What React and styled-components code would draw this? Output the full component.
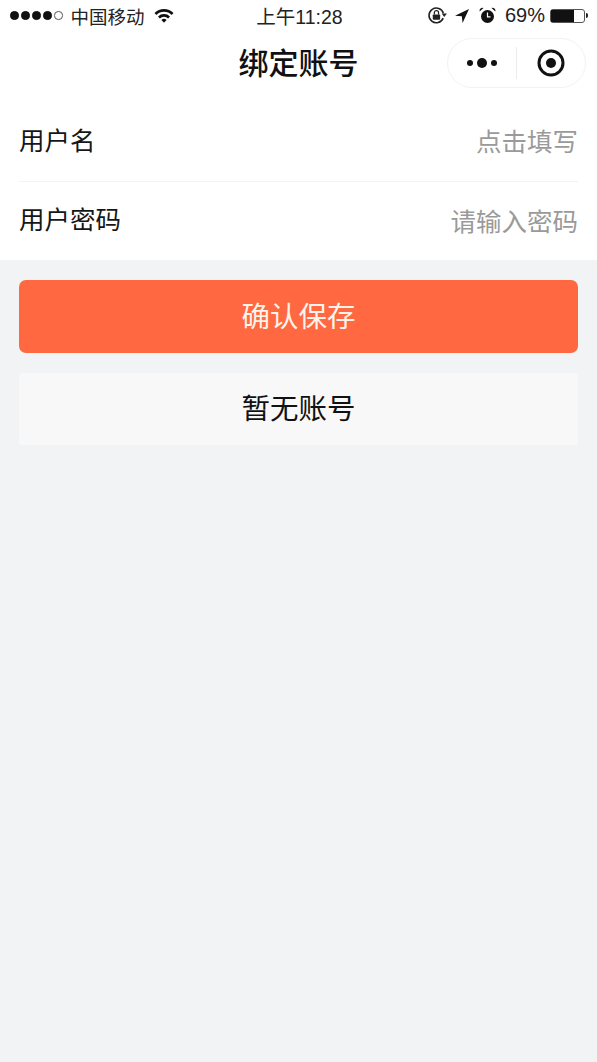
import React from 'react';
import styled, { createGlobalStyle } from 'styled-components';

const GlobalStyle = createGlobalStyle`
  html, body {
    margin: 0;
    padding: 0;
    background: #f2f3f5;
    font-family: "Noto Sans CJK SC", "Liberation Sans", sans-serif;
  }
`;

const Page = styled.div`
  width: 597px;
  height: 1062px;
  overflow: hidden;
  background: #f2f3f5;
  display: flex;
  flex-direction: column;
`;

const Header = styled.div`
  background: #fff;
`;

const StatusBar = styled.div`
  height: 33px;
  padding: 0 8px 2px 10px;
  box-sizing: border-box;
  display: grid;
  grid-template-columns: 1fr auto 1fr;
  align-items: center;
  color: #111;
`;

const StatusLeft = styled.div`
  display: flex;
  align-items: center;
  gap: 8px;
  font-size: 18.5px;
  color: #222;
`;

const StatusRight = styled.div`
  display: flex;
  align-items: center;
  justify-content: flex-end;
  font-size: 20px;
  color: #222;
`;

const Clock = styled.div`
  font-size: 19.5px;
  color: #222;
  span {
    font-family: "Liberation Sans", sans-serif;
  }
`;

const Dots = styled.div`
  display: flex;
  gap: 2.5px;
`;

const Dot = styled.i`
  width: 8.5px;
  height: 8.5px;
  box-sizing: border-box;
  border-radius: 50%;
  background: ${(p) => (p.$empty ? '#fff' : '#111')};
  border: 1px solid ${(p) => (p.$empty ? '#555' : '#111')};
`;

const Percent = styled.span`
  font-family: "Liberation Sans", sans-serif;
  margin: 0 5px 0 9px;
`;

const IconSlot = styled.svg`
  display: block;
  flex: none;
  margin-left: ${(p) => p.$ml || 0}px;
`;

const Battery = styled.div`
  width: 35px;
  height: 14px;
  box-sizing: border-box;
  border: 1px solid #555;
  border-radius: 3px;
  margin-right: 4px;
  position: relative;
  &::after {
    content: "";
    position: absolute;
    right: -4px;
    top: 3px;
    width: 2px;
    height: 5px;
    background: #222;
    border-radius: 0 2px 2px 0;
  }
`;

const BatteryFill = styled.div`
  height: 100%;
  background: #111;
`;

const NavBar = styled.div`
  height: 71px;
  position: relative;
  display: flex;
  align-items: flex-start;
  justify-content: center;
`;

const Title = styled.h1`
  margin: 7px 0 0;
  font-size: 30px;
  line-height: 42px;
  font-weight: 500;
  color: #111;
`;

const Capsule = styled.div`
  position: absolute;
  top: 5px;
  right: 11px;
  width: 139px;
  height: 50px;
  box-sizing: border-box;
  border: 1px solid #f2f2f2;
  border-radius: 25px;
  background: #fff;
  display: flex;
  align-items: center;
`;

const CapsuleHalf = styled.div`
  flex: 1;
  height: 100%;
  display: flex;
  align-items: center;
  justify-content: center;
`;

const CapsuleLine = styled.div`
  width: 1px;
  height: 32px;
  background: #ececec;
`;

const Form = styled.div`
  background: #fff;
  padding: 0 19px;
  margin-top: -2px;
`;

const Row = styled.div`
  height: ${(p) => (p.$last ? 78 : 79)}px;
  display: flex;
  align-items: center;
  justify-content: space-between;
  border-bottom: ${(p) => (p.$last ? 'none' : '1px solid #f3f3f3')};
`;

const Label = styled.div`
  font-size: 25.5px;
  color: #161616;
  margin-bottom: ${(p) => (p.$last ? 8 : 7)}px;
`;

const Placeholder = styled.div`
  font-size: 25.5px;
  color: #9a9a9a;
  margin-bottom: ${(p) => (p.$last ? 3 : 5)}px;
`;

const Actions = styled.div`
  padding: 20px 19px 0;
  display: flex;
  flex-direction: column;
  gap: 20px;
`;

const Button = styled.div`
  height: ${(p) => (p.$primary ? 73 : 72)}px;
  box-sizing: border-box;
  padding-bottom: ${(p) => (p.$primary ? 4 : 5)}px;
  border-radius: ${(p) => (p.$primary ? 7 : 3)}px;
  background: ${(p) => (p.$primary ? '#ff6841' : '#f8f8f9')};
  color: ${(p) => (p.$primary ? '#fdf3ea' : '#111')};
  font-size: 28.5px;
  display: flex;
  align-items: center;
  justify-content: center;
`;

function Wifi() {
  return (
    <IconSlot width="20" height="15" viewBox="0 0 20 15" $ml={1}>
      <path d="M0.5 5 A13.5 13.5 0 0 1 19.5 5 L17.6 7 A10.8 10.8 0 0 0 2.4 7 Z" fill="#111" />
      <path d="M4 8.5 A8.6 8.6 0 0 1 16 8.5 L14.1 10.4 A6 6 0 0 0 5.9 10.4 Z" fill="#111" />
      <path d="M7.4 12 A3.8 3.8 0 0 1 12.6 12 L10 14.8 Z" fill="#111" />
    </IconSlot>
  );
}

function RotationLock() {
  return (
    <IconSlot width="21" height="19" viewBox="0 0 20 18">
      <path d="M15.4 11.5 A7 7 0 1 1 15.6 6.8" fill="none" stroke="#222" strokeWidth="1.5" />
      <path d="M14 7 L19 7 L16.4 10.4 Z" fill="#222" />
      <rect x="5.5" y="8" width="7" height="5" rx="0.8" fill="#222" />
      <path d="M7 8 V6.4 A2 2 0 0 1 11 6.4 V8" fill="none" stroke="#222" strokeWidth="1.2" />
    </IconSlot>
  );
}

function LocationArrow() {
  return (
    <IconSlot width="16" height="16" viewBox="0 0 16 16" $ml={6}>
      <path d="M15 1 L1 7.8 L7.8 8.2 L8.6 15 Z" fill="#111" />
    </IconSlot>
  );
}

function AlarmClock() {
  return (
    <IconSlot width="17" height="17" viewBox="0 0 17 17" $ml={9}>
      <circle cx="8.5" cy="9.5" r="6.5" fill="#111" />
      <path d="M8.5 5.5 V9.8 H11.5" fill="none" stroke="#fff" strokeWidth="1.2" />
      <path d="M0.6 4.5 A3 3 0 0 1 4.5 1 Z" fill="#111" />
      <path d="M16.4 4.5 A3 3 0 0 0 12.5 1 Z" fill="#111" />
    </IconSlot>
  );
}

function MoreDots() {
  return (
    <IconSlot width="32" height="12" viewBox="0 0 32 12">
      <circle cx="4" cy="6" r="3" fill="#111" />
      <circle cx="16" cy="6" r="5" fill="#111" />
      <circle cx="28" cy="6" r="3" fill="#111" />
    </IconSlot>
  );
}

function Target() {
  return (
    <IconSlot width="28" height="28" viewBox="0 0 28 28">
      <circle cx="14" cy="14" r="12" fill="none" stroke="#111" strokeWidth="3" />
      <circle cx="14" cy="14" r="5" fill="#111" />
    </IconSlot>
  );
}

export default function App() {
  return (
    <Page>
      <GlobalStyle />
      <Header>
        <StatusBar>
          <StatusLeft>
            <Dots>
              <Dot />
              <Dot />
              <Dot />
              <Dot />
              <Dot $empty />
            </Dots>
            <span>中国移动</span>
            <Wifi />
          </StatusLeft>
          <Clock>
            上午<span>11:28</span>
          </Clock>
          <StatusRight>
            <RotationLock />
            <LocationArrow />
            <AlarmClock />
            <Percent>69%</Percent>
            <Battery>
              <BatteryFill style={{ width: '69%' }} />
            </Battery>
          </StatusRight>
        </StatusBar>
        <NavBar>
          <Title>绑定账号</Title>
          <Capsule>
            <CapsuleHalf>
              <MoreDots />
            </CapsuleHalf>
            <CapsuleLine />
            <CapsuleHalf>
              <Target />
            </CapsuleHalf>
          </Capsule>
        </NavBar>
      </Header>
      <Form>
        <Row>
          <Label>用户名</Label>
          <Placeholder>点击填写</Placeholder>
        </Row>
        <Row $last>
          <Label $last>用户密码</Label>
          <Placeholder $last>请输入密码</Placeholder>
        </Row>
      </Form>
      <Actions>
        <Button $primary>确认保存</Button>
        <Button>暂无账号</Button>
      </Actions>
    </Page>
  );
}
